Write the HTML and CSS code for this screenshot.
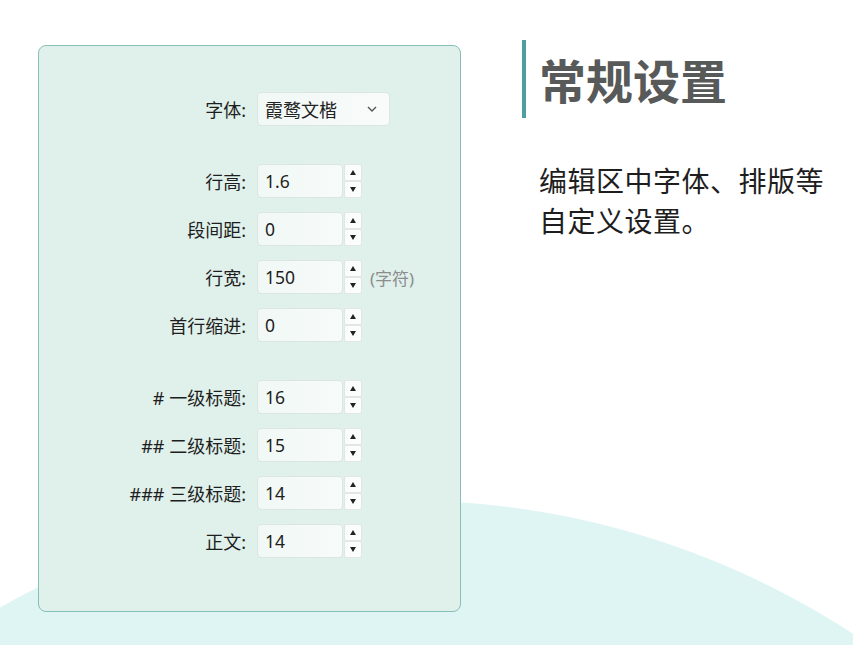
FILE: index.html
```html
<!DOCTYPE html>
<html lang="zh">
<head>
    <meta charset="UTF-8">
    <meta name="viewport" content="width=device-width, initial-scale=1.0">
    <title>常规设置</title>
    <link rel="stylesheet" href="styles.css">
</head>
<body>
    <div class="page">
        <div class="settings-card">
            <div class="row">
                <label>字体:</label>
                <div class="select-box">
                    <span>霞鹜文楷</span>
                    <svg class="chevron" width="12" height="8" viewBox="0 0 12 8"><path d="M2 2 L6 6 L10 2" fill="none" stroke="#555" stroke-width="1.4"/></svg>
                </div>
            </div>

            <div class="group">
                <div class="row">
                    <label>行高:</label>
                    <input type="text" value="1.6">
                    <div class="spin"><span class="up"></span><span class="down"></span></div>
                </div>
                <div class="row">
                    <label>段间距:</label>
                    <input type="text" value="0">
                    <div class="spin"><span class="up"></span><span class="down"></span></div>
                </div>
                <div class="row">
                    <label>行宽:</label>
                    <input type="text" value="150">
                    <div class="spin"><span class="up"></span><span class="down"></span></div>
                    <span class="unit">(字符)</span>
                </div>
                <div class="row">
                    <label>首行缩进:</label>
                    <input type="text" value="0">
                    <div class="spin"><span class="up"></span><span class="down"></span></div>
                </div>
            </div>

            <div class="group">
                <div class="row">
                    <label># 一级标题:</label>
                    <input type="text" value="16">
                    <div class="spin"><span class="up"></span><span class="down"></span></div>
                </div>
                <div class="row">
                    <label>## 二级标题:</label>
                    <input type="text" value="15">
                    <div class="spin"><span class="up"></span><span class="down"></span></div>
                </div>
                <div class="row">
                    <label>### 三级标题:</label>
                    <input type="text" value="14">
                    <div class="spin"><span class="up"></span><span class="down"></span></div>
                </div>
                <div class="row">
                    <label>正文:</label>
                    <input type="text" value="14">
                    <div class="spin"><span class="up"></span><span class="down"></span></div>
                </div>
            </div>
        </div>

        <div class="intro">
            <h1 class="title">常规设置</h1>
            <p class="desc">编辑区中字体、排版等自定义设置。</p>
        </div>
    </div>
</body>
</html>
```

FILE: styles.css
```css
body, html {
    margin: 0;
    padding: 0;
    font-family: "Noto Sans", "Noto Sans CJK SC", sans-serif;
    color: #222;
}

body {
    width: 853px;
    height: 645px;
    overflow: hidden;
    background-color: #fff;
    /* 底部的浅青色大圆 */
    background-image: radial-gradient(circle 820px at 405px 1320px, #dff5f3 819px, #fff 820px);
}

.page {
    display: flex;
    align-items: flex-start;
    padding: 40px 0 0 38px;
}

.settings-card {
    width: 421px;
    margin-top: 5px;
    padding: 46px 0 53px;
    background-color: #e0f0eb;
    border: 1px solid #86bfb8;
    border-radius: 8px;
    display: flex;
    flex-direction: column;
    gap: 38px;
}

.group {
    display: flex;
    flex-direction: column;
    gap: 14px;
}

.row {
    display: flex;
    align-items: center;
    height: 34px;
}

.row label {
    width: 207px;
    text-align: right;
    margin-right: 11px;
    font-size: 18px;
    color: #1e1e1e;
}

.row input {
    width: 86px;
    height: 34px;
    box-sizing: border-box;
    padding: 0 7px;
    border: 1px solid #dbe5e1;
    border-radius: 4px;
    background: linear-gradient(to right, #f1f8f5, #f7fbfa);
    font-family: "Noto Sans", "Noto Sans CJK SC", sans-serif;
    font-size: 17.5px;
    color: #1e1e1e;
    outline: none;
}

.spin {
    display: flex;
    flex-direction: column;
    margin-left: 1px;
    width: 18px;
    height: 34px;
}

.spin span {
    flex: 1;
    display: flex;
    align-items: center;
    justify-content: center;
    background-color: #fbfcfc;
    border: 1px solid #e2e6e4;
    border-radius: 2px;
}

.spin span::after {
    content: "";
    width: 0;
    height: 0;
    border-left: 3.5px solid transparent;
    border-right: 3.5px solid transparent;
}

.spin .up::after {
    border-bottom: 5px solid #222;
}

.spin .down::after {
    border-top: 5px solid #222;
}

.unit {
    margin-left: 8px;
    font-size: 17px;
    color: #8a8d8c;
}

.select-box {
    width: 133px;
    height: 34px;
    box-sizing: border-box;
    padding: 0 11px 0 7px;
    display: flex;
    align-items: center;
    justify-content: space-between;
    border: 1px solid #dbe5e1;
    border-radius: 4px;
    background: linear-gradient(to right, #f1f8f5, #f8fbfa);
    font-size: 18px;
}

.intro {
    margin-left: 61px;
}

.title {
    margin: 0;
    height: 78px;
    line-height: 78px;
    border-left: 4px solid #4d9fa0;
    padding-left: 13px;
    font-size: 47px;
    font-weight: bold;
    color: #575a59;
    font-family: "Noto Sans CJK SC", sans-serif;
}

.desc {
    margin: 42px 0 0 17px;
    width: 300px;
    font-size: 28px;
    letter-spacing: 0.5px;
    line-height: 40px;
    color: #1e1e1e;
    font-family: "Noto Sans CJK SC", sans-serif;
}
```
